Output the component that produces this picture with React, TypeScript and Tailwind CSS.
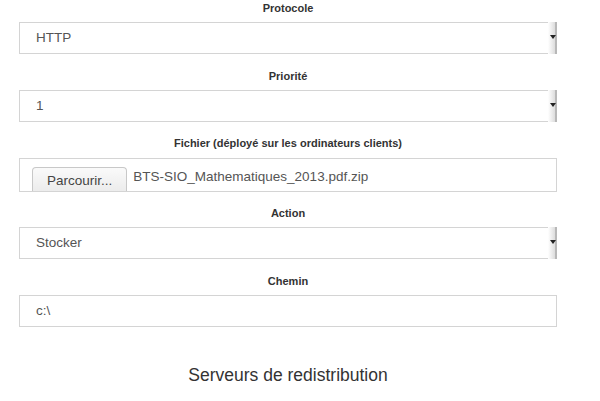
import React from "react";

function Label({ children }: { children: React.ReactNode }) {
  return (
    <div className="h-4 text-center text-[11px] font-bold leading-4 text-[#333]">{children}</div>
  );
}

function SelectBox({ value }: { value: string }) {
  return (
    <div className="relative mt-[6px] flex h-[32px] items-center border border-[#d4d4d4] bg-white pl-4 text-[13.5px] text-[#555]">
      <span>{value}</span>
      <div className="absolute right-[-1px] top-[-1px] bottom-[-1px] w-[9px] border-r-2 border-[#b8b8b8] bg-gradient-to-r from-white to-[#dcdcdc]">
        <div className="absolute left-[2px] top-[13px] h-0 w-0 border-x-[3px] border-t-[4px] border-x-transparent border-t-[#222]" />
      </div>
    </div>
  );
}

function TextBox({ value }: { value: string }) {
  return (
    <div className="mt-[6px] flex h-[32px] items-center border border-[#d4d4d4] bg-white pl-4 text-[13.5px] text-[#555]">
      <span>{value}</span>
    </div>
  );
}

function FileBox() {
  return (
    <div className="mt-[7px] flex h-[34px] items-end overflow-hidden border border-[#d4d4d4] bg-white pl-3 text-[13.5px] text-[#555]">
      <div className="flex h-[24px] items-start rounded-t-[4px] border border-b-0 border-[#c8c8c8] bg-gradient-to-b from-[#fafafa] to-[#ececec] px-[14px] pt-[3px] text-[#444]">
        Parcourir...
      </div>
      <span className="mb-[3px] ml-[6px] self-end leading-[22px]">BTS-SIO_Mathematiques_2013.pdf.zip</span>
    </div>
  );
}

export default function App() {
  return (
    <div
      className="h-[401px] w-[600px] overflow-hidden bg-white"
      style={{ fontFamily: '"Liberation Sans", Arial, sans-serif' }}
    >
      <div className="w-[557px] pl-[19px]">
        <div>
          <Label>Protocole</Label>
          <SelectBox value="HTTP" />
        </div>
        <div className="mt-[14px]">
          <Label>Priorité</Label>
          <SelectBox value="1" />
        </div>
        <div className="mt-[13px]">
          <Label>Fichier (déployé sur les ordinateurs clients)</Label>
          <FileBox />
        </div>
        <div className="mt-[13px]">
          <Label>Action</Label>
          <SelectBox value="Stocker" />
        </div>
        <div className="mt-[14px]">
          <Label>Chemin</Label>
          <TextBox value="c:\" />
        </div>
        <div className="mt-[38px] text-center text-[17.5px] leading-5 text-[#333]">
          Serveurs de redistribution
        </div>
      </div>
    </div>
  );
}
